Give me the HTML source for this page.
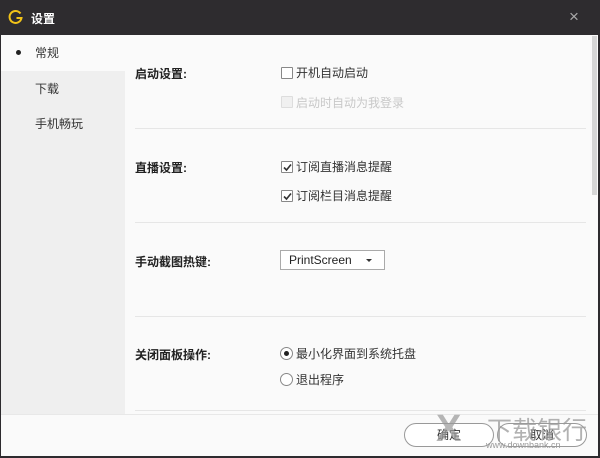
<!DOCTYPE html><html><head><meta charset="utf-8"><style>
*{margin:0;padding:0;box-sizing:border-box}
body{width:600px;height:458px;overflow:hidden;background:#2d2b2e;font-family:"Liberation Sans","Noto Sans CJK SC",sans-serif;font-size:12px;color:#333;position:relative}
.a{position:absolute}
.title{left:0;top:0;width:600px;height:35px;background:#2e2c2f}
.win{left:1px;top:35px;width:597px;height:421px;background:#fafafa}
.side{left:1px;top:35px;width:124px;height:379px;background:#efefef}
.sel{left:1px;top:35px;width:124px;height:36px;background:#fafafa}
.lbl{font-weight:bold;color:#222;font-size:12px}
.hr{left:135px;width:451px;height:1px;background:#e6e6e6}
.cb{width:12px;height:12px;border:1px solid #888;background:#fff;border-radius:1px}
.rd{width:13px;height:13px;border:1px solid #888;border-radius:50%;background:#fff}
.btn{width:90px;height:24px;border:1px solid #999;border-radius:12px;text-align:center;line-height:22px;background:#fff}
</style></head><body>
<div class="a title"></div>
<svg class="a" style="left:8px;top:9px" width="16" height="16" viewBox="0 0 16 16"><path d="M12.5 4.5A6 6 0 1 0 13.5 9H8.5" fill="none" stroke="#f2c318" stroke-width="2"/></svg>
<div class="a" style="left:31px;top:10px;color:#fff;font-weight:bold;font-size:12px">设置</div>
<div class="a" style="left:569px;top:7px;color:#aaa;font-size:17px">×</div>
<div class="a win"></div>
<div class="a side"></div>
<div class="a sel"></div>
<div class="a" style="left:16px;top:50px;width:5px;height:5px;border-radius:50%;background:#222"></div>
<div class="a" style="left:35px;top:44px;color:#333">常规</div>
<div class="a" style="left:35px;top:80px;color:#333">下载</div>
<div class="a" style="left:35px;top:115px;color:#333">手机畅玩</div>
<div class="a" style="left:592px;top:36px;width:5px;height:159px;background:#d6d6d6"></div>

<div class="a lbl" style="left:135px;top:65px">启动设置:</div>
<div class="a cb" style="left:281px;top:67px"></div>
<div class="a" style="left:296px;top:64px">开机自动启动</div>
<div class="a cb" style="left:281px;top:96px;border-color:#ddd;background:#f0f0f0"></div>
<div class="a" style="left:296px;top:94px;color:#c8c8c8">启动时自动为我登录</div>
<div class="a hr" style="top:128px"></div>

<div class="a lbl" style="left:135px;top:159px">直播设置:</div>
<div class="a cb" style="left:281px;top:161px"></div>
<svg class="a" style="left:282px;top:162px" width="11" height="11"><path d="M2 5.5L4.5 8 9 2.5" fill="none" stroke="#333" stroke-width="1.6"/></svg>
<div class="a" style="left:296px;top:158px">订阅直播消息提醒</div>
<div class="a cb" style="left:281px;top:190px"></div>
<svg class="a" style="left:282px;top:191px" width="11" height="11"><path d="M2 5.5L4.5 8 9 2.5" fill="none" stroke="#333" stroke-width="1.6"/></svg>
<div class="a" style="left:296px;top:187px">订阅栏目消息提醒</div>
<div class="a hr" style="top:222px"></div>

<div class="a lbl" style="left:135px;top:253px">手动截图热键:</div>
<div class="a" style="left:280px;top:250px;width:105px;height:20px;border:1px solid #aaa;background:#fff;padding-left:8px;line-height:18px;color:#222">PrintScreen</div>
<div class="a" style="left:366px;top:259px;width:0;height:0;border-left:3px solid transparent;border-right:3px solid transparent;border-top:3px solid #333"></div>
<div class="a hr" style="top:316px"></div>

<div class="a lbl" style="left:135px;top:346px">关闭面板操作:</div>
<div class="a rd" style="left:280px;top:347px"></div>
<div class="a" style="left:284px;top:351px;width:5px;height:5px;border-radius:50%;background:#222"></div>
<div class="a" style="left:296px;top:345px">最小化界面到系统托盘</div>
<div class="a rd" style="left:280px;top:373px"></div>
<div class="a" style="left:296px;top:371px">退出程序</div>
<div class="a hr" style="top:410px"></div>
<div class="a" style="left:1px;top:414px;width:597px;height:1px;background:#e8e8e8"></div>

<div class="a btn" style="left:404px;top:423px">确定</div>
<div class="a btn" style="left:497px;top:423px">取消</div>
<div class="a" style="left:487px;top:411px;font-size:25px;color:#999;opacity:.75">下载银行</div>
<div class="a" style="left:486px;top:440px;font-size:9px;color:#999">www.downbank.cn</div>
<div class="a" style="left:436px;top:408px;font-size:38px;font-weight:bold;color:#999;opacity:.7">X</div>
</body></html>
